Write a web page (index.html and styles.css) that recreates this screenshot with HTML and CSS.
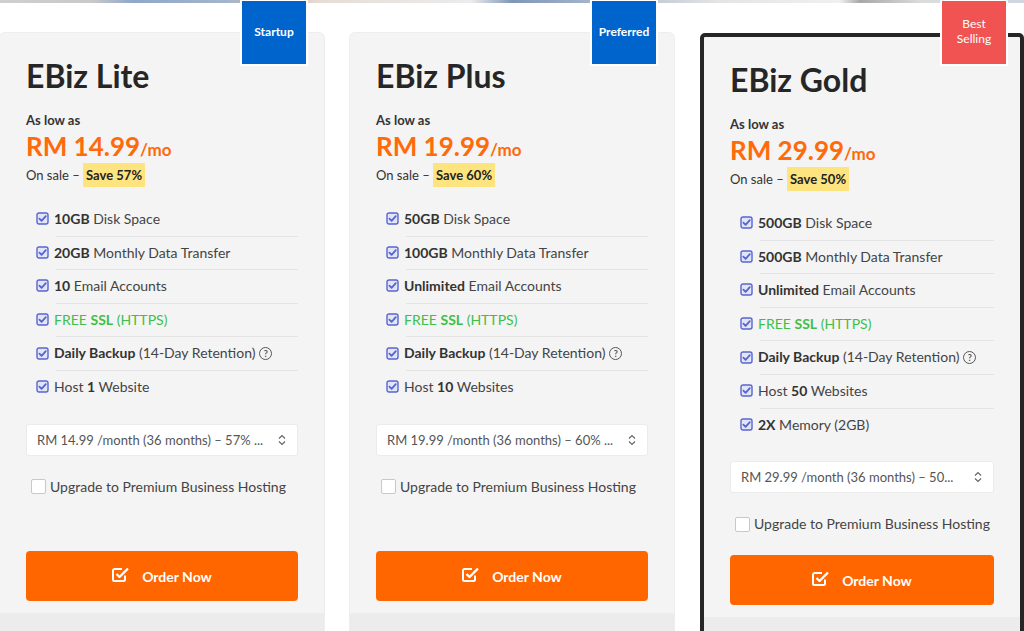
FILE: index.html
```html
<!DOCTYPE html>
<html lang="en">
<head>
<meta charset="UTF-8">
<meta name="viewport" content="width=device-width, initial-scale=1.0">
<title>EBiz Hosting Plans</title>
<link rel="stylesheet" href="styles.css">
</head>
<body>
<div class="strip"></div>

<div class="plans">
    <!-- Lite -->
    <div class="plan">
        <span class="badge blue">Startup</span>
        <div class="plan-body">
            <h2>EBiz Lite</h2>
            <p class="low">As low as</p>
            <p class="price">RM 14.99<small>/mo</small></p>
            <p class="sale">On sale – <mark>Save 57%</mark></p>
            <ul class="features">
                <li><svg class="tick" viewBox="0 0 13 13"><rect x="1" y="1" width="11" height="11" rx="2"/><path d="M3.4 6.6l2.2 2.2 4.2-4.6"/></svg><span><b>10GB</b> Disk Space</span></li>
                <li><svg class="tick" viewBox="0 0 13 13"><rect x="1" y="1" width="11" height="11" rx="2"/><path d="M3.4 6.6l2.2 2.2 4.2-4.6"/></svg><span><b>20GB</b> Monthly Data Transfer</span></li>
                <li><svg class="tick" viewBox="0 0 13 13"><rect x="1" y="1" width="11" height="11" rx="2"/><path d="M3.4 6.6l2.2 2.2 4.2-4.6"/></svg><span><b>10</b> Email Accounts</span></li>
                <li><svg class="tick" viewBox="0 0 13 13"><rect x="1" y="1" width="11" height="11" rx="2"/><path d="M3.4 6.6l2.2 2.2 4.2-4.6"/></svg><span class="green">FREE <b>SSL</b> (HTTPS)</span></li>
                <li><svg class="tick" viewBox="0 0 13 13"><rect x="1" y="1" width="11" height="11" rx="2"/><path d="M3.4 6.6l2.2 2.2 4.2-4.6"/></svg><span><b>Daily Backup</b> (14-Day Retention)</span><i class="help">?</i></li>
                <li><svg class="tick" viewBox="0 0 13 13"><rect x="1" y="1" width="11" height="11" rx="2"/><path d="M3.4 6.6l2.2 2.2 4.2-4.6"/></svg><span>Host <b>1</b> Website</span></li>
            </ul>
            <div class="select">RM 14.99 /month (36 months) – 57% ...<svg viewBox="0 0 8 12"><path d="M1 4.5L4 1.5 7 4.5M1 7.5L4 10.5 7 7.5"/></svg></div>
            <label class="upgrade"><span class="box"></span>Upgrade to Premium Business Hosting</label>
            <a class="order" href="#"><svg viewBox="0 0 17 17"><path d="M13 9.5v4a1.5 1.5 0 0 1-1.5 1.5h-9A1.5 1.5 0 0 1 1 13.5v-9A1.5 1.5 0 0 1 2.5 3H10"/><path class="ck" d="M4.5 8l3 3L16 2.5"/></svg>Order Now</a>
        </div>
        <div class="plan-foot"><a href="#">View full specification</a></div>
    </div>

    <!-- Plus -->
    <div class="plan">
        <span class="badge blue">Preferred</span>
        <div class="plan-body">
            <h2>EBiz Plus</h2>
            <p class="low">As low as</p>
            <p class="price">RM 19.99<small>/mo</small></p>
            <p class="sale">On sale – <mark>Save 60%</mark></p>
            <ul class="features">
                <li><svg class="tick" viewBox="0 0 13 13"><rect x="1" y="1" width="11" height="11" rx="2"/><path d="M3.4 6.6l2.2 2.2 4.2-4.6"/></svg><span><b>50GB</b> Disk Space</span></li>
                <li><svg class="tick" viewBox="0 0 13 13"><rect x="1" y="1" width="11" height="11" rx="2"/><path d="M3.4 6.6l2.2 2.2 4.2-4.6"/></svg><span><b>100GB</b> Monthly Data Transfer</span></li>
                <li><svg class="tick" viewBox="0 0 13 13"><rect x="1" y="1" width="11" height="11" rx="2"/><path d="M3.4 6.6l2.2 2.2 4.2-4.6"/></svg><span><b>Unlimited</b> Email Accounts</span></li>
                <li><svg class="tick" viewBox="0 0 13 13"><rect x="1" y="1" width="11" height="11" rx="2"/><path d="M3.4 6.6l2.2 2.2 4.2-4.6"/></svg><span class="green">FREE <b>SSL</b> (HTTPS)</span></li>
                <li><svg class="tick" viewBox="0 0 13 13"><rect x="1" y="1" width="11" height="11" rx="2"/><path d="M3.4 6.6l2.2 2.2 4.2-4.6"/></svg><span><b>Daily Backup</b> (14-Day Retention)</span><i class="help">?</i></li>
                <li><svg class="tick" viewBox="0 0 13 13"><rect x="1" y="1" width="11" height="11" rx="2"/><path d="M3.4 6.6l2.2 2.2 4.2-4.6"/></svg><span>Host <b>10</b> Websites</span></li>
            </ul>
            <div class="select">RM 19.99 /month (36 months) – 60% ...<svg viewBox="0 0 8 12"><path d="M1 4.5L4 1.5 7 4.5M1 7.5L4 10.5 7 7.5"/></svg></div>
            <label class="upgrade"><span class="box"></span>Upgrade to Premium Business Hosting</label>
            <a class="order" href="#"><svg viewBox="0 0 17 17"><path d="M13 9.5v4a1.5 1.5 0 0 1-1.5 1.5h-9A1.5 1.5 0 0 1 1 13.5v-9A1.5 1.5 0 0 1 2.5 3H10"/><path class="ck" d="M4.5 8l3 3L16 2.5"/></svg>Order Now</a>
        </div>
        <div class="plan-foot"><a href="#">View full specification</a></div>
    </div>

    <!-- Gold -->
    <div class="plan gold">
        <span class="badge red">Best<br>Selling</span>
        <div class="plan-body">
            <h2>EBiz Gold</h2>
            <p class="low">As low as</p>
            <p class="price">RM 29.99<small>/mo</small></p>
            <p class="sale">On sale – <mark>Save 50%</mark></p>
            <ul class="features">
                <li><svg class="tick" viewBox="0 0 13 13"><rect x="1" y="1" width="11" height="11" rx="2"/><path d="M3.4 6.6l2.2 2.2 4.2-4.6"/></svg><span><b>500GB</b> Disk Space</span></li>
                <li><svg class="tick" viewBox="0 0 13 13"><rect x="1" y="1" width="11" height="11" rx="2"/><path d="M3.4 6.6l2.2 2.2 4.2-4.6"/></svg><span><b>500GB</b> Monthly Data Transfer</span></li>
                <li><svg class="tick" viewBox="0 0 13 13"><rect x="1" y="1" width="11" height="11" rx="2"/><path d="M3.4 6.6l2.2 2.2 4.2-4.6"/></svg><span><b>Unlimited</b> Email Accounts</span></li>
                <li><svg class="tick" viewBox="0 0 13 13"><rect x="1" y="1" width="11" height="11" rx="2"/><path d="M3.4 6.6l2.2 2.2 4.2-4.6"/></svg><span class="green">FREE <b>SSL</b> (HTTPS)</span></li>
                <li><svg class="tick" viewBox="0 0 13 13"><rect x="1" y="1" width="11" height="11" rx="2"/><path d="M3.4 6.6l2.2 2.2 4.2-4.6"/></svg><span><b>Daily Backup</b> (14-Day Retention)</span><i class="help">?</i></li>
                <li><svg class="tick" viewBox="0 0 13 13"><rect x="1" y="1" width="11" height="11" rx="2"/><path d="M3.4 6.6l2.2 2.2 4.2-4.6"/></svg><span>Host <b>50</b> Websites</span></li>
                <li><svg class="tick" viewBox="0 0 13 13"><rect x="1" y="1" width="11" height="11" rx="2"/><path d="M3.4 6.6l2.2 2.2 4.2-4.6"/></svg><span><b>2X</b> Memory (2GB)</span></li>
            </ul>
            <div class="select">RM 29.99 /month (36 months) – 50...<svg viewBox="0 0 8 12"><path d="M1 4.5L4 1.5 7 4.5M1 7.5L4 10.5 7 7.5"/></svg></div>
            <label class="upgrade"><span class="box"></span>Upgrade to Premium Business Hosting</label>
            <a class="order" href="#"><svg viewBox="0 0 17 17"><path d="M13 9.5v4a1.5 1.5 0 0 1-1.5 1.5h-9A1.5 1.5 0 0 1 1 13.5v-9A1.5 1.5 0 0 1 2.5 3H10"/><path class="ck" d="M4.5 8l3 3L16 2.5"/></svg>Order Now</a>
        </div>
        <div class="plan-foot"><a href="#">View full specification</a></div>
    </div>
</div>
</body>
</html>
```

FILE: styles.css
```css
body {
    font-family: Lato, "Open Sans", Arial, sans-serif;
    background-color: #fff;
    color: #444;
    margin: 0;
    padding: 0;
}

.strip {
    height: 3px;
    background: linear-gradient(90deg, #cfcfcf 0%, #c9c9c9 9%, #8fa7c9 13%, #a3b5cc 22%, #d2b8a4 27%, #e6dcd4 31%, #ececec 46%, #7f97b8 50%, #b9c4d4 62%, #e4e4e4 70%, #f0f0f0 82%, #a8a8a8 84%, #dcdcdc 90%, #cfd6e0 100%);
}

.plans {
    display: grid;
    grid-template-columns: repeat(3, 324px);
    grid-gap: 26px;
    align-items: start;
    padding-top: 30px;
}

.plan {
    position: relative;
    background-color: #f4f4f4;
    border-radius: 5px;
    box-shadow: 0 0 0 1px #eeeeee;
}

.plan.gold {
    border: 4px solid #262626;
    box-shadow: none;
}

.badge {
    position: absolute;
    top: -34px;
    right: 16px;
    width: 68px;
    height: 67px;
    box-sizing: border-box;
    border: 2px solid #fff;
    padding-bottom: 3px;
    color: #fff;
    font-size: 12px;
    font-weight: 700;
    line-height: 15px;
    text-align: center;
    display: flex;
    justify-content: center;
    align-items: center;
}

.gold .badge {
    top: -38px;
    right: 12px;
}

.badge.blue {
    background-color: #0064cd;
}

.badge.red {
    background-color: #f05352;
    font-weight: 400;
}

.plan-body {
    display: flex;
    flex-direction: column;
    min-height: 580px;
    box-sizing: border-box;
    padding: 23px 26px 12px;
}

h2 {
    margin: 0;
    font-size: 32px;
    line-height: 40px;
    font-weight: 700;
    color: #262626;
}

.low {
    margin: 15px 0 0;
    font-size: 13px;
    line-height: 18px;
    font-weight: 700;
    color: #333;
}

.price {
    margin: 2px 0 0;
    font-size: 26px;
    line-height: 30px;
    font-weight: 700;
    color: #ff6a0a;
}

.price small {
    font-size: 17px;
}

.sale {
    margin: -1px 0 0;
    font-size: 13px;
    line-height: 22px;
    color: #333;
}

.sale mark {
    background-color: #fde47f;
    color: #222;
    font-weight: 700;
    padding: 4px 3px;
}

.features {
    list-style: none;
    margin: 16px 0 0 30px;
    padding: 0;
}

.features li {
    display: flex;
    align-items: center;
    font-size: 14px;
    line-height: 19.6px;
    padding: 7px 0;
    border-bottom: 1px solid #e3e3e3;
    margin-bottom: -1px;
}

.features li:last-child {
    border-bottom: none;
}

.features b {
    color: #333;
}

.tick {
    width: 13px;
    height: 13px;
    margin: 0 5px 0 -20px;
    flex: none;
}

.tick rect {
    fill: #e2e5f7;
    stroke: #5865cf;
    stroke-width: 1.4;
}

.tick path {
    fill: none;
    stroke: #5865cf;
    stroke-width: 1.8;
    stroke-linecap: round;
    stroke-linejoin: round;
}

.green,
.green b {
    color: #3fbf4a;
}

.help {
    font-style: normal;
    width: 11px;
    height: 11px;
    border: 1px solid #555;
    border-radius: 50%;
    font-size: 9px;
    line-height: 11px;
    text-align: center;
    font-weight: 700;
    color: #555;
    margin-left: 4px;
}

.select {
    margin-top: 21px;
    height: 32px;
    box-sizing: border-box;
    background-color: #fff;
    border: 1px solid #ebebeb;
    border-radius: 3px;
    padding: 0 10px;
    display: flex;
    align-items: center;
    justify-content: space-between;
    font-size: 13px;
    color: #555;
}

.select svg {
    width: 8px;
    height: 12px;
    margin-right: 1px;
}

.select svg path {
    fill: none;
    stroke: #666;
    stroke-width: 1.2;
}

.upgrade {
    margin: 21px 0 21px 5px;
    display: flex;
    align-items: center;
    font-size: 14px;
    line-height: 20px;
    color: #444;
}

.upgrade .box {
    width: 13px;
    height: 13px;
    background-color: #fff;
    border: 1px solid #c8c8c8;
    border-radius: 2px;
    margin-right: 4px;
}

.order {
    margin-top: auto;
    height: 50px;
    background-color: #ff6600;
    border-radius: 4px;
    color: #fff;
    font-size: 14px;
    font-weight: 700;
    text-decoration: none;
    display: flex;
    justify-content: center;
    align-items: center;
}

.order svg {
    width: 17px;
    height: 17px;
    margin: -4px 13px 0 0;
}

.order svg path {
    fill: none;
    stroke: #fff;
    stroke-width: 2;
    stroke-linejoin: round;
}

.order svg .ck {
    stroke-width: 2.4;
}

.plan-foot {
    background-color: #ececec;
    padding: 13px 0 14px;
    text-align: center;
    border-radius: 0 0 5px 5px;
}

.plan-foot a {
    font-size: 12px;
    color: #1f5cb8;
    text-decoration: none;
}
```
